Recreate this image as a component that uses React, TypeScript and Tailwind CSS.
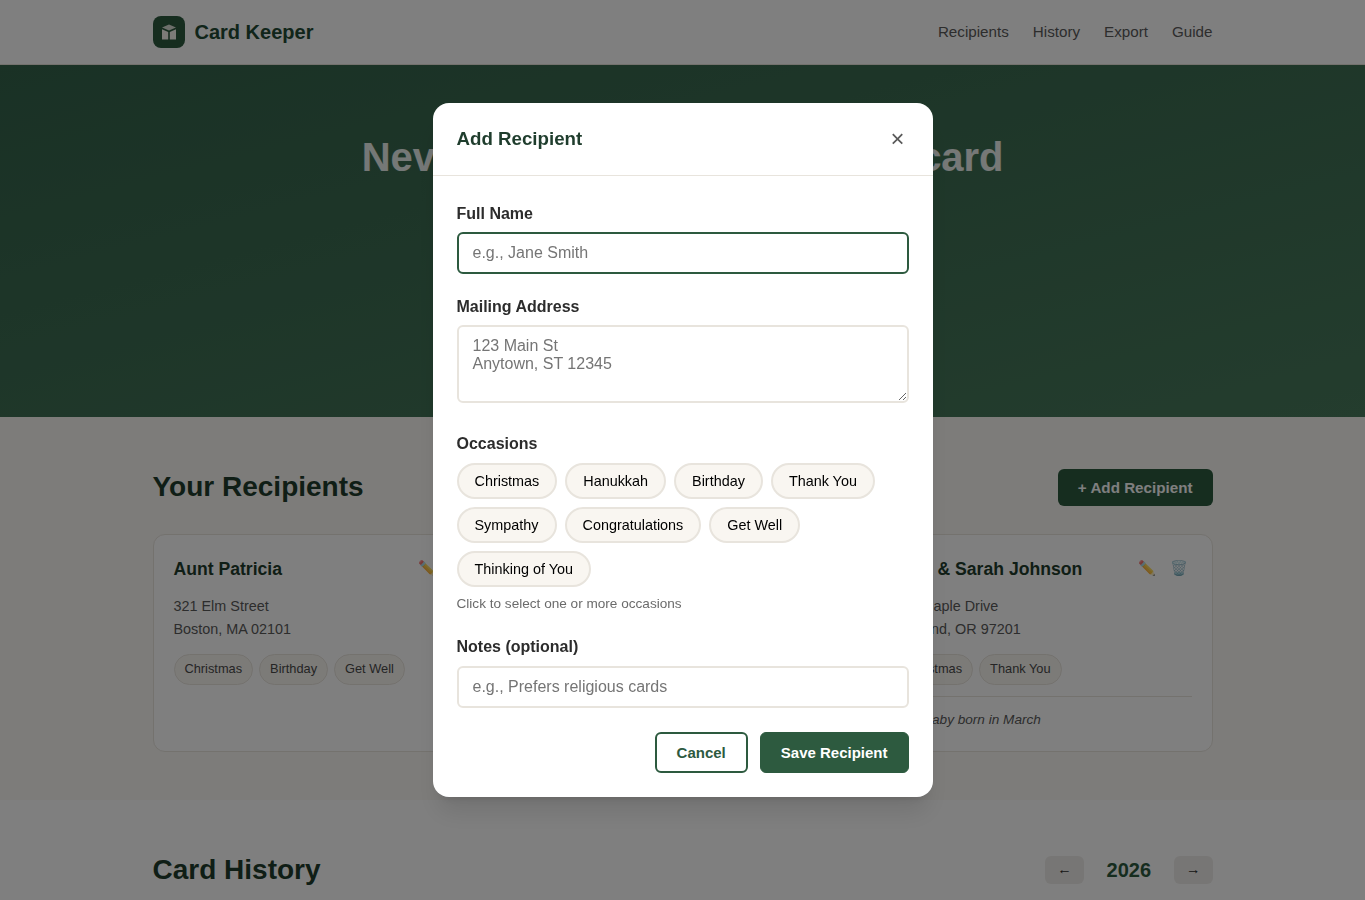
const sans = "font-['Liberation_Sans',Arial,sans-serif]";

const occasions = [
  "Christmas",
  "Hanukkah",
  "Birthday",
  "Thank You",
  "Sympathy",
  "Congratulations",
  "Get Well",
  "Thinking of You",
];

const recipients = [
  {
    name: "Aunt Patricia",
    lines: ["321 Elm Street", "Boston, MA 02101"],
    tags: ["Christmas", "Birthday", "Get Well"],
    note: "",
  },
  {
    name: "Grandma Rose",
    lines: ["88 Oak Avenue", "Austin, TX 78701"],
    tags: ["Christmas", "Birthday"],
    note: "",
  },
  {
    name: "Mike & Sarah Johnson",
    lines: ["456 Maple Drive", "Portland, OR 97201"],
    tags: ["Christmas", "Thank You"],
    note: "New baby born in March",
  },
];

function Logo() {
  return (
    <div className="flex h-8 w-8 items-center justify-center rounded-lg bg-[#2d5a3f]">
      <svg width="18" height="18" viewBox="0 0 18 18" fill="#f9f6f1">
        <path d="M9 1.5 16 4.6 9 7.6 2 4.6Z" opacity="0.85" />
        <path d="M2 6.3 8.2 8.9V16.5H2Z" />
        <path d="M16 6.3 9.8 8.9V16.5H16Z" />
      </svg>
    </div>
  );
}

function RecipientCard({ r }: { r: (typeof recipients)[number] }) {
  return (
    <div className="min-h-[218px] rounded-xl border border-[#e8e4dd] bg-white p-5">
      <div className="flex items-start justify-between">
        <h3 className="text-[17.6px] font-bold text-[#1f3d2d]">{r.name}</h3>
        <div className="flex gap-1 opacity-80">
          <span className="px-[5px] py-[3px] text-[14.4px] leading-[1.4]">✏️</span>
          <span className="py-[3px] pr-1 pl-[5px] text-[14.4px] leading-[1.4]">🗑️</span>
        </div>
      </div>
      <div className="mt-3 text-[14.4px] text-[#5a5a5a]">
        {r.lines.map((line) => (
          <div key={line}>{line}</div>
        ))}
      </div>
      <div className="mt-[13px] flex flex-wrap gap-1.5">
        {r.tags.map((tag) => (
          <span
            key={tag}
            className="rounded-full border border-[#e8e4dd] bg-[#f9f6f1] px-2.5 py-1 text-[12.8px] text-[#4a4a4a]"
          >
            {tag}
          </span>
        ))}
      </div>
      {r.note && (
        <div className="mt-[11.5px] border-t border-[#e8e4dd] pt-[11.5px] text-[13.6px] text-[#5a5a5a] italic">
          {r.note}
        </div>
      )}
    </div>
  );
}

function Page() {
  return (
    <div>
      <header className="h-[65px] border-b border-[#e8e4dd] bg-white">
        <div className="mx-auto flex h-16 max-w-[1100px] items-center justify-between px-5">
          <div className="flex items-center gap-2.5">
            <Logo />
            <span className="text-[20px] font-bold text-[#234a35]">Card Keeper</span>
          </div>
          <nav className="flex gap-6 text-[15.2px] text-[#5a5a5a]">
            <a>Recipients</a>
            <a>History</a>
            <a>Export</a>
            <a>Guide</a>
          </nav>
        </div>
      </header>

      <section className="h-[352px] bg-linear-to-br from-[#34634b] to-[#487a5c] pt-[60px] text-center">
        <h1 className="text-[40px] leading-[1.6] font-bold tracking-[-0.09px] text-white/90">
          Never forget to send a family card
        </h1>
      </section>

      <section className="bg-[#faf8f5] py-12">
        <div className="mx-auto max-w-[1100px] px-5">
          <div className="mb-6 flex items-center justify-between">
            <h2 className="text-[28px] font-bold text-[#1f3d2d]">Your Recipients</h2>
            <button className="rounded-md bg-[#2d5a3f] px-5 py-2.5 text-[15.2px] leading-[17px] font-bold text-white">
              + Add Recipient
            </button>
          </div>
          <div className="grid grid-cols-3 gap-5">
            {recipients.map((r) => (
              <RecipientCard key={r.name} r={r} />
            ))}
          </div>
        </div>
      </section>

      <section className="bg-white py-12">
        <div className="mx-auto max-w-[1100px] px-5">
          <div className="flex items-center justify-between">
            <h2 className="text-[28px] font-bold text-[#1f3d2d]">Card History</h2>
            <div className="flex items-center gap-[23px]">
              <button className="rounded-md bg-[#efedea] px-3 pt-[5px] pb-[7px] text-[14.4px] leading-4 text-[#2c2c2c]">←</button>
              <span className="text-[20px] font-bold text-[#2d5a3f]">2026</span>
              <button className="rounded-md bg-[#efedea] px-3 pt-[5px] pb-[7px] text-[14.4px] leading-4 text-[#2c2c2c]">→</button>
            </div>
          </div>
        </div>
      </section>
    </div>
  );
}

function Modal() {
  return (
    <div className="fixed inset-0 flex items-center justify-center bg-black/50">
      <div className="w-[500px] rounded-2xl bg-white shadow-xl">
        <div className="flex h-[73px] items-center justify-between border-b border-[#e8e4dd] px-6">
          <h2 className="text-[18.72px] font-bold text-[#1f3d2d]">Add Recipient</h2>
          <button className="flex h-6 w-[22px] items-center justify-center text-[24px] leading-none text-[#5a5a5a]">
            ×
          </button>
        </div>
        <div className="px-6 pt-[24.4px] pb-6">
          <label className="mb-[5.6px] block font-bold text-[#2c2c2c]">Full Name</label>
          <input
            placeholder="e.g., Jane Smith"
            className="block h-[42px] w-full rounded-md border-2 border-[#2d5a3f] px-3.5 text-[16px] outline-none placeholder:text-[#757575]"
          />
          <label className="mt-5 mb-1.5 block font-bold text-[#2c2c2c]">Mailing Address</label>
          <textarea
            rows={3}
            placeholder={"123 Main St\nAnytown, ST 12345"}
            className="w-full rounded-md border-2 border-[#e8e4dd] px-3.5 py-2.5 align-baseline text-[16px] leading-[18px] outline-none placeholder:text-[#757575]"
          />
          <label className="mt-5 mb-1.5 block font-bold text-[#2c2c2c]">Occasions</label>
          <div className="flex flex-wrap gap-2">
            {occasions.map((o) => (
              <button
                key={o}
                className="rounded-full border-2 border-[#e8e4dd] bg-[#f9f6f1] px-4 py-2 text-[14.4px] leading-4 text-black"
              >
                {o}
              </button>
            ))}
          </div>
          <p className="mt-1.5 text-[13.6px] text-[#6b6b6b]">Click to select one or more occasions</p>
          <label className="mt-5 mb-1.5 block font-bold text-[#2c2c2c]">Notes (optional)</label>
          <input
            placeholder="e.g., Prefers religious cards"
            className="block h-[42px] w-full rounded-md border-2 border-[#e8e4dd] px-3.5 text-[16px] outline-none placeholder:text-[#757575]"
          />
          <div className="mt-6 flex justify-end gap-3">
            <button className="rounded-md border-2 border-[#2d5a3f] bg-white px-5 py-2.5 text-[15px] leading-[17px] font-bold text-[#2d5a3f]">
              Cancel
            </button>
            <button className="rounded-md border border-[#2d5a3f] bg-[#2d5a3f] px-5 py-2.5 text-[15px] leading-[17px] font-bold text-white">
              Save Recipient
            </button>
          </div>
        </div>
      </div>
    </div>
  );
}

export default function App() {
  return (
    <div className={`h-screen overflow-hidden leading-[1.6] text-[#2c2c2c] ${sans}`}>
      <Page />
      <Modal />
    </div>
  );
}
